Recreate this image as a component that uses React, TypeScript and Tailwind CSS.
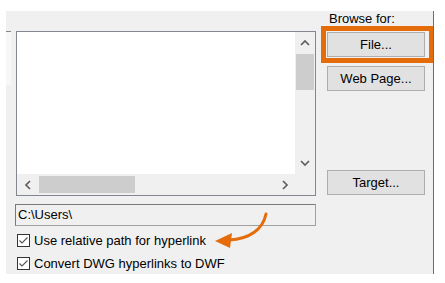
import React from 'react'

const font = { fontFamily: '"Liberation Sans", Arial, sans-serif' }

function Chevron({ dir }: { dir: 'up' | 'down' | 'left' | 'right' }) {
  const pts = {
    up: '1,6 5,2 9,6',
    down: '1,2 5,6 9,2',
    left: '6,1 2,5 6,9',
    right: '3,1 7,5 3,9',
  }[dir]
  const vertical = dir === 'up' || dir === 'down'
  return (
    <svg width={vertical ? 10 : 9} height={vertical ? 8 : 10} viewBox={vertical ? '0 0 10 8' : '0 0 9 10'}>
      <polyline points={pts} fill="none" stroke="#606060" strokeWidth="1.7" />
    </svg>
  )
}

function Checkbox({ label }: { label: string }) {
  return (
    <div className="flex items-center h-[13px]">
      <div className="w-[13px] h-[13px] border border-[#333333] bg-white flex items-center justify-center ml-[1px]">
        <svg width="11" height="11" viewBox="0 0 11 11">
          <polyline points="1.5,5.5 4,8 9.5,2.5" fill="none" stroke="#555" strokeWidth="1.1" />
        </svg>
      </div>
      <span className="ml-[4px] text-[13px] leading-[15px] text-black">{label}</span>
    </div>
  )
}

function WinButton({ children }: { children: React.ReactNode }) {
  return (
    <div className="w-[98px] h-[25px] bg-[#e1e1e1] border border-[#adadad] flex items-center justify-center text-[13px] text-black">
      {children}
    </div>
  )
}

export default function App() {
  return (
    <div className="relative w-[445px] h-[283px] bg-white overflow-hidden pt-[11px] pl-[6px]" style={font}>
      <div className="w-[428px] h-[263px] bg-[#f0f0f0] border-r border-[#6d6d6d] flex">
        {/* cut-off control on the left */}
        <div className="w-[5px] h-[54px] mt-[20px] bg-[#f7f7f7] border-t border-[#828790]" />

        {/* left column */}
        <div className="ml-[5px] mt-[20px] w-[300px] flex flex-col">
          <div className="h-[165px] border border-[#828790] flex flex-col">
            <div className="flex h-[142px]">
              <div className="flex-1 bg-white" />
              <div className="w-[20px] bg-[#f0f0f0] flex flex-col items-center">
                <div className="h-[22px] flex items-center justify-center">
                  <Chevron dir="up" />
                </div>
                <div className="w-[18px] h-[36px] bg-[#cdcdcd]" />
                <div className="flex-1" />
                <div className="h-[22px] flex items-center justify-center">
                  <Chevron dir="down" />
                </div>
              </div>
            </div>
            <div className="flex h-[21px]">
              <div className="flex-1 bg-[#f0f0f0] flex items-center">
                <div className="w-[22px] flex items-center justify-center">
                  <Chevron dir="left" />
                </div>
                <div className="w-[96px] h-[17px] bg-[#cdcdcd]" />
                <div className="flex-1" />
                <div className="w-[22px] flex items-center justify-center">
                  <Chevron dir="right" />
                </div>
              </div>
              <div className="w-[20px] bg-[#f0f0f0]" />
            </div>
          </div>

          <div className="mt-[8px] -ml-[1px] w-[301px] h-[22px] bg-[#f0f0f0] border border-[#a0a0a0] border-t-[#7a7a7a] border-l-[#7a7a7a] flex items-center pl-[2px] text-[13px] text-black">
            C:\Users\
          </div>

          <div className="mt-[8px] flex flex-col gap-[10px]">
            <Checkbox label="Use relative path for hyperlink" />
            <Checkbox label="Convert DWG hyperlinks to DWF" />
          </div>
        </div>

        {/* right column */}
        <div className="ml-[11px] w-[98px] flex flex-col">
          <div className="ml-[2px] text-[13px] leading-[15px] text-black">Browse for:</div>
          <div className="relative mt-[6px]">
            <WinButton>File...</WinButton>
            <div className="absolute -left-[6px] -right-[8px] -top-[6px] -bottom-[6px] border-[5px] border-r-4 border-[#e46c0a]" />
          </div>
          <div className="mt-[9px]">
            <WinButton>Web Page...</WinButton>
          </div>
          <div className="mt-[79px]">
            <WinButton>Target...</WinButton>
          </div>
        </div>
      </div>

      {/* annotation arrow */}
      <svg className="absolute left-0 top-0 pointer-events-none" width="445" height="283" viewBox="0 0 445 283">
        <path d="M266 214 C263 229 250 239 229 240" fill="none" stroke="#e46c0a" strokeWidth="3" strokeLinecap="round" />
        <polygon points="215,241 232,233 230,248" fill="#e46c0a" />
      </svg>
    </div>
  )
}
